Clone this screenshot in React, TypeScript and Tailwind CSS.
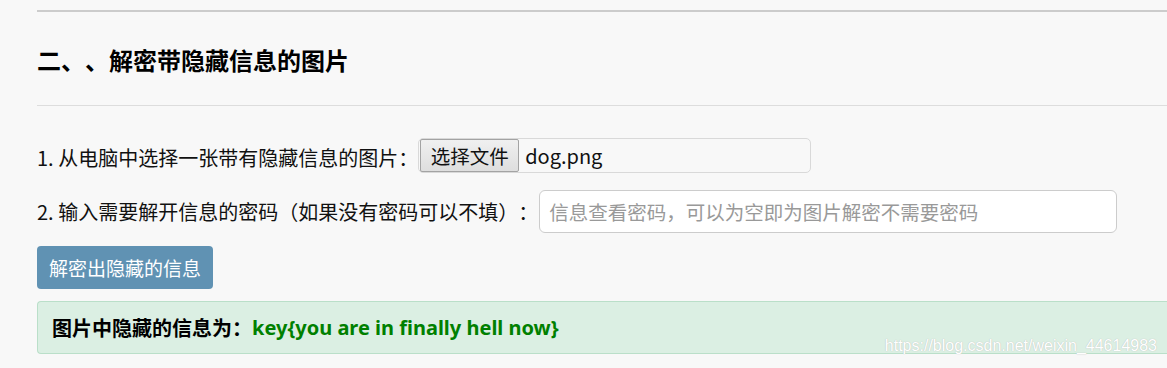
export default function App() {
  return (
    <main className="min-h-[368px] w-full overflow-hidden bg-[#f8f8f8] pl-[37px] text-[#111] [text-spacing-trim:space-all] [font-family:'Noto_Sans_CJK_SC','Noto_Sans',sans-serif]">
      <div className="pt-[10px]">
        <div className="h-[2px] bg-[#cccccc]" />
      </div>

      <div className="flex h-[93px] items-center pt-[3px]">
        <h3 className="text-[24px] font-bold leading-none text-black">二、、解密带隐藏信息的图片</h3>
      </div>
      <div className="h-px bg-[#dddddd]" />

      <div className="mt-[32px] flex h-[35px] items-center">
        <span className="pt-[4px] text-[20px] leading-none">1. 从电脑中选择一张带有隐藏信息的图片：</span>
        <div className="ml-0 flex h-[35px] w-[393px] items-center rounded-[5px] border border-[#d9d9d9] bg-[#f8f8f8] pl-px">
          <div className="flex h-[33px] w-[99px] items-center justify-center rounded-[2px] border border-[#a3a3a3] bg-gradient-to-b from-[#f0f0f0] to-[#dedede] text-[19.5px] leading-none">
            选择文件
          </div>
          <span className="ml-[6px] text-[20px] leading-none">dog.png</span>
        </div>
      </div>

      <div className="mt-[17px] flex h-[43px] items-center">
        <span className="pt-[1px] text-[20px] leading-none">2. 输入需要解开信息的密码（如果没有密码可以不填）：</span>
        <div className="ml-[1px] flex h-[43px] w-[578px] items-center rounded-[6px] border border-[#cccccc] bg-white pl-[9px]">
          <span className="text-[19.5px] leading-none text-[#999999]">信息查看密码，可以为空即为图片解密不需要密码</span>
        </div>
      </div>

      <button className="mt-[13px] flex h-[43px] w-[176px] items-center justify-center rounded-[4px] bg-[#6092b3] text-[19px] leading-none text-white">
        解密出隐藏的信息
      </button>

      <div className="relative mt-[12px] flex h-[53px] items-center rounded-l-[4px] border border-r-0 border-[#badfc9] bg-[#dbefe3] pl-[14px]">
        <span className="text-[20px] font-bold leading-none text-black">图片中隐藏的信息为：</span>
        <span className="text-[20px] font-bold leading-none text-[#008000] [font-family:'Noto_Sans','Noto_Sans_CJK_SC',sans-serif]">
          key{"{"}you are in finally hell now{"}"}
        </span>
        <span className="absolute right-[10px] top-[36px] text-[16px] leading-none text-white [font-family:'Liberation_Sans',sans-serif] [text-shadow:0_0_1px_#b0b0b0]">
          https://blog.csdn.net/weixin_44614983
        </span>
      </div>
    </main>
  );
}
